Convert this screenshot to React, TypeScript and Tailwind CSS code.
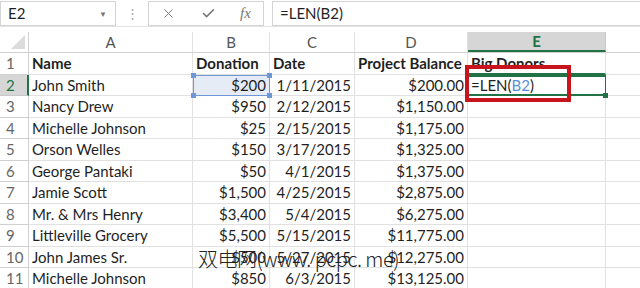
import { X, Check } from 'lucide-react';

const rows = [
  ['Name', 'Donation', 'Date', 'Project Balance', 'Big Donors'],
  ['John Smith', '$200', '1/11/2015', '$200.00', ''],
  ['Nancy Drew', '$950', '2/12/2015', '$1,150.00', ''],
  ['Michelle Johnson', '$25', '2/15/2015', '$1,175.00', ''],
  ['Orson Welles', '$150', '3/17/2015', '$1,325.00', ''],
  ['George Pantaki', '$50', '4/1/2015', '$1,375.00', ''],
  ['Jamie Scott', '$1,500', '4/25/2015', '$2,875.00', ''],
  ['Mr. & Mrs Henry', '$3,400', '5/4/2015', '$6,275.00', ''],
  ['Littleville Grocery', '$5,500', '5/15/2015', '$11,775.00', ''],
  ['John James Sr.', '$500', '5/27/2015', '$12,275.00', ''],
  ['Michelle Johnson', '$850', '6/3/2015', '$13,125.00', ''],
];

const cols = ['A', 'B', 'C', 'D', 'E'];
const widths = ['w-[164px]', 'w-[77px]', 'w-[85px]', 'w-[113px]', 'w-[138px]'];

export default function App() {
  return (
    <div className="relative w-[640px] h-[288px] overflow-hidden bg-white text-[#1f1f1f]" style={{ fontFamily: 'Lato, "Liberation Sans", sans-serif' }}>
      {/* formula bar */}
      <div className="flex items-center h-[27px] border-b border-[#e3e3e3] pt-[1px]">
        <div className="flex items-center justify-between w-[116px] h-[25px] border border-[#d4d4d4] pl-[7px] pr-[8px] text-[15px]">
          <span>E2</span>
          <span className="text-[8px] text-[#777]">▼</span>
        </div>
        <div className="w-[32px] text-center text-[#aaa] text-[13px] leading-none">⋮</div>
        <div className="flex items-center justify-around w-[116px] h-[25px] border border-[#d4d4d4] text-[#777]">
          <X className="w-[15px] h-[15px]" strokeWidth={1.5} />
          <Check className="w-[15px] h-[15px]" strokeWidth={2.5} />
          <span className="italic text-[15px]" style={{ fontFamily: '"Liberation Serif", serif' }}>fx</span>
        </div>
        <div className="flex-1 flex items-center h-[25px] ml-[8px] border border-r-0 border-[#d4d4d4] pl-[7px] text-[15px]">=LEN(B2)</div>
      </div>
      <div className="h-[5px]" />
      {/* column headers */}
      <div className="flex h-[21px] text-[15px] text-[#444] border-b border-[#d0d0d0]">
        <div className="w-[29px] relative border-r border-[#d0d0d0]">
          <div className="absolute right-[3px] bottom-[3px] w-0 h-0 border-l-[14px] border-l-transparent border-b-[14px] border-b-[#dcdcdc]" />
        </div>
        {cols.map((c, i) =>
          c === 'E' ? (
            <div key={c} className={`${widths[i]} flex items-center justify-center bg-[#d6d6d6] border-b-2 border-[#217346] text-[#217346] font-bold border-r border-r-[#c8c8c8]`}>{c}</div>
          ) : (
            <div key={c} className={`${widths[i]} flex items-center justify-center border-r border-[#e1e1e1] text-[#555]`}>{c}</div>
          )
        )}
        <div className="flex-1" />
      </div>
      {/* grid rows */}
      {rows.map((r, ri) => (
        <div key={ri} className="flex h-[21.5px] text-[15px]">
          <div className={`w-[29px] flex items-center pl-[6px] border-r border-b ${ri === 1 ? 'bg-[#d6d6d6] text-[#217346] border-r-2 border-r-[#217346] border-b-[#c8c8c8]' : 'text-[#666] border-[#d0d0d0]'}`}>{ri + 1}</div>
          {r.map((v, ci) => {
            const bold = ri === 0;
            const right = !bold && ci > 0 && ci < 4;
            let extra = 'border-r border-b border-[#e1e1e1]';
            if (ri === 1 && ci === 1) extra = 'bg-[#e6ecf5] border border-[#6f96d6] relative';
            if (ri === 1 && ci === 4) extra = 'border-y-2 border-r border-[#217346] relative';
            if (ri === 0 && ci === 4) extra = 'border-r border-[#e1e1e1] border-b-2 border-b-[#217346]';
            return (
              <div key={ci} className={`${widths[ci]} flex items-center overflow-visible whitespace-nowrap px-[3px] ${right ? 'justify-end' : ''} ${bold ? 'font-bold' : ''} ${extra}`}>
                {ri === 1 && ci === 4 ? (
                  <span>=LEN(<span className="text-[#5b8fdb]">B2</span>)</span>
                ) : v}
                {ri === 1 && ci === 1 && (
                  <>
                    <span className="absolute -left-[3px] -top-[3px] w-[5px] h-[5px] bg-[#6f96d6]" />
                    <span className="absolute -right-[3px] -top-[3px] w-[5px] h-[5px] bg-[#6f96d6]" />
                    <span className="absolute -left-[3px] -bottom-[3px] w-[5px] h-[5px] bg-[#6f96d6]" />
                    <span className="absolute -right-[3px] -bottom-[3px] w-[5px] h-[5px] bg-[#6f96d6]" />
                  </>
                )}
                {ri === 1 && ci === 4 && (
                  <span className="absolute -right-[3px] -bottom-[4px] w-[5px] h-[5px] bg-[#217346]" />
                )}
              </div>
            );
          })}
          <div className="flex-1 border-b border-[#e1e1e1]" />
        </div>
      ))}
      {/* red highlight box */}
      <div className="absolute left-[465px] top-[65px] w-[106px] h-[37px] border-[4px] border-[#c8141c]" />
      {/* watermark */}
      <div className="absolute left-[198px] top-[244px] text-[20px] tracking-[-0.5px] font-light text-[#222] whitespace-nowrap" style={{ fontFamily: '"Noto Sans CJK SC", "Liberation Sans", sans-serif' }}>
        双电网(www. pcpc. me)
      </div>
    </div>
  );
}
